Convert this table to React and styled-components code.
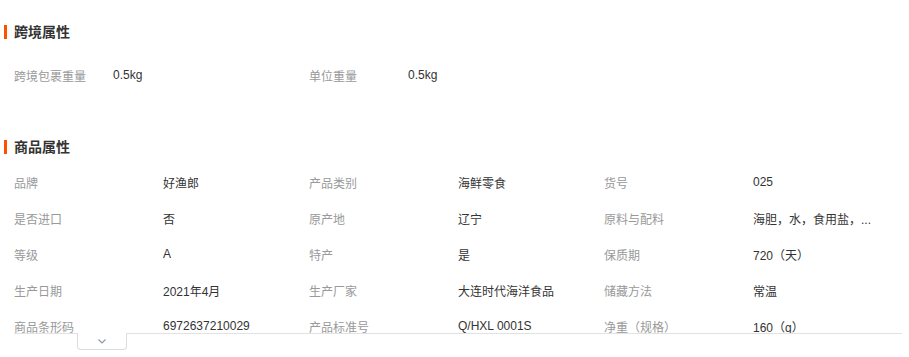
import React from "react";
import styled, { createGlobalStyle } from "styled-components";

const Global = createGlobalStyle`
    body {
        margin: 0;
        background: #fff;
        font-family: "Liberation Sans", "Noto Sans CJK SC", sans-serif;
    }
`

const Page = styled.div`
    width: 909px;
    padding: 25px 0 24px;
`

const Section = styled.section`
    margin-top: ${(p) => p.gap || 0}px;
`

const Title = styled.h3`
    margin: 0 0 0 4px;
    padding-left: 7px;
    border-left: 3px solid #ff5000;
    height: 14px;
    line-height: 14px;
    font-size: 14px;
    font-weight: bold;
    color: #333;
`

const Grid = styled.div`
    display: grid;
    grid-template-columns: repeat(3, 295px);
    margin: ${(p) => p.top}px 0 0 ${(p) => p.left || 0}px;
`

const Item = styled.div`
    display: flex;
    align-items: center;
    height: 36px;
    font-size: 12px;
`

const Label = styled.span`
    width: ${(p) => p.w}px;
    flex-shrink: 0;
    color: #999;
`

const Value = styled.span`
    color: #333;
    white-space: nowrap;
`

const FoldWrap = styled.div`
    position: relative;
    margin: 10px 7px 0 14px;
`

const Fold = styled.div`
    height: 169px;
    overflow: hidden;
    border-bottom: 1px solid #e2e2e2;
`

const Tab = styled.div`
    position: absolute;
    left: 63px;
    top: 169px;
    width: 50px;
    height: 17px;
    background: #fff;
    border: 1px solid #dcdcdc;
    border-top: none;
    border-radius: 0 0 4px 4px;
    display: flex;
    justify-content: center;
    padding-top: 6px;
    box-sizing: border-box;
`

const cross = [
    ["跨境包裹重量", "0.5kg"],
    ["单位重量", "0.5kg"],
]

const goods = [
    ["品牌", "好渔郎"],
    ["产品类别", "海鲜零食"],
    ["货号", "025"],
    ["是否进口", "否"],
    ["原产地", "辽宁"],
    ["原料与配料", "海胆，水，食用盐，..."],
    ["等级", "A"],
    ["特产", "是"],
    ["保质期", "720（天）"],
    ["生产日期", "2021年4月"],
    ["生产厂家", "大连时代海洋食品"],
    ["储藏方法", "常温"],
    ["商品条形码", "6972637210029"],
    ["产品标准号", "Q/HXL 0001S"],
    ["净重（规格）", "160（g）"],
]

const App = () => {
    return (
        <>
            <Global />
            <Page>
                <Section>
                    <Title>跨境属性</Title>
                    <Grid top={18} left={14}>
                        {cross.map(([k, v]) => (
                            <Item key={k}>
                                <Label w={99}>{k}</Label>
                                <Value>{v}</Value>
                            </Item>
                        ))}
                    </Grid>
                </Section>
                <Section gap={47}>
                    <Title>商品属性</Title>
                    <FoldWrap>
                        <Fold>
                            <Grid top={0}>
                                {goods.map(([k, v]) => (
                                    <Item key={k}>
                                        <Label w={149}>{k}</Label>
                                        <Value>{v}</Value>
                                    </Item>
                                ))}
                            </Grid>
                        </Fold>
                        <Tab>
                            <svg width="8" height="5" viewBox="0 0 8 5">
                                <polyline points="0.5,0.5 4,4 7.5,0.5" fill="none" stroke="#8a9bb0" strokeWidth="1.2" />
                            </svg>
                        </Tab>
                    </FoldWrap>
                </Section>
            </Page>
        </>
    )
}

export default App;
